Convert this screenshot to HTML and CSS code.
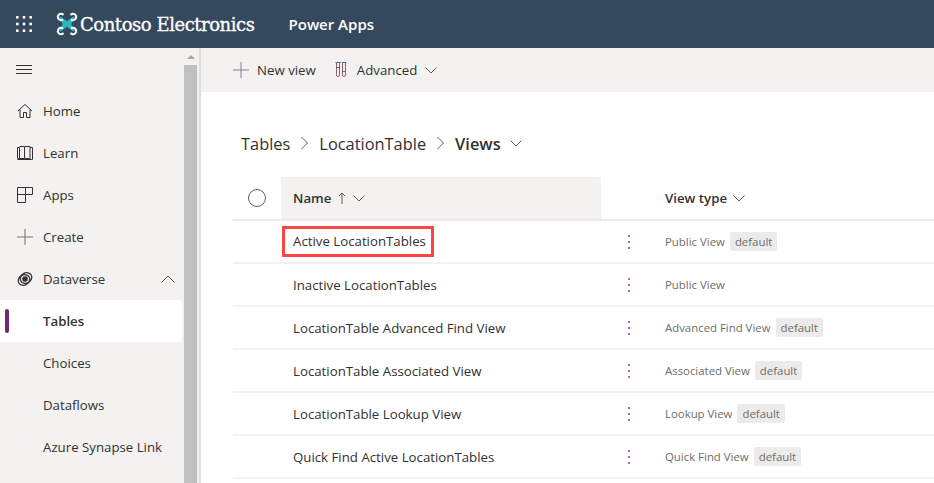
FILE: index.html
```html
<!DOCTYPE html>
<html lang="en">
<head>
    <meta charset="UTF-8">
    <meta name="viewport" content="width=device-width, initial-scale=1.0">
    <title>Power Apps - Views</title>
    <link rel="stylesheet" href="styles.css">
</head>
<body>
    <header class="topbar">
        <svg class="waffle" width="16" height="16" viewBox="0 0 16 16" fill="#fff">
            <rect x="0" y="0" width="2.6" height="2.6"/><rect x="6.7" y="0" width="2.6" height="2.6"/><rect x="13.4" y="0" width="2.6" height="2.6"/>
            <rect x="0" y="6.7" width="2.6" height="2.6"/><rect x="6.7" y="6.7" width="2.6" height="2.6"/><rect x="13.4" y="6.7" width="2.6" height="2.6"/>
            <rect x="0" y="13.4" width="2.6" height="2.6"/><rect x="6.7" y="13.4" width="2.6" height="2.6"/><rect x="13.4" y="13.4" width="2.6" height="2.6"/>
        </svg>
        <svg class="logo" width="22" height="24" viewBox="0 0 22 24">
            <path d="M4 5 L11 10 L18 5 L14.5 12 L18 19 L11 14 L4 19 L7.5 12 Z" fill="#2bb8bd" stroke="#2bb8bd" stroke-width="1.5"/>
            <g fill="none" stroke="#fff" stroke-width="2">
                <path d="M7 7.5A3.2 3.2 0 1 1 7.5 3"/><path d="M15 7.5A3.2 3.2 0 1 0 14.5 3"/>
                <path d="M7 16.5A3.2 3.2 0 1 0 7.5 21"/><path d="M15 16.5A3.2 3.2 0 1 1 14.5 21"/>
            </g>
        </svg>
        <span class="brand">Contoso Electronics</span>
        <span class="product">Power Apps</span>
    </header>

    <div class="layout">
        <nav class="sidebar">
            <div class="nav-scroll">
                <div class="hamburger">
                    <svg width="16" height="10" viewBox="0 0 16 10" stroke="#323130" fill="none">
                        <path d="M0 .5H16M0 4.5H16M0 8.5H16"/>
                    </svg>
                </div>
                <a class="nav-item">
                    <svg class="nav-icon" width="16" height="16" viewBox="0 0 16 16" fill="none" stroke="#323130">
                        <path d="M1 8 L8 1.5 L15 8M3 6.5V14.5H6.5V9.5H9.5V14.5H13V6.5"/>
                    </svg>
                    Home
                </a>
                <a class="nav-item">
                    <svg class="nav-icon" width="16" height="16" viewBox="0 0 16 16" fill="none" stroke="#323130">
                        <path d="M.5 2.5H2.5V13.5H.5ZM2.5 1.5H7.5V13.5H2.5M8 1.5H13V13.5H8M13 2.5H15.5V14.5H.5"/>
                    </svg>
                    Learn
                </a>
                <a class="nav-item">
                    <svg class="nav-icon" width="16" height="16" viewBox="0 0 16 16" fill="none" stroke="#323130">
                        <path d="M.5 .5H15.5V7.5H8.5V15.5H.5ZM.5 7.5H8.5M8.5 .5V7.5"/>
                    </svg>
                    Apps
                </a>
                <a class="nav-item">
                    <svg class="nav-icon" width="16" height="16" viewBox="0 0 16 16" fill="none" stroke="#7a7067">
                        <path d="M0 8H16M8 0V16"/>
                    </svg>
                    Create
                </a>
                <a class="nav-item">
                    <svg class="nav-icon" width="16" height="16" viewBox="0 0 16 16" fill="none" stroke="#323130">
                        <ellipse cx="7" cy="9" rx="6" ry="5" stroke-width="1.3" transform="rotate(-30 7 9)"/>
                        <ellipse cx="9" cy="7" rx="6" ry="5" stroke-width="1.3" transform="rotate(-30 9 7)"/>
                        <circle cx="8" cy="8" r="2.8" fill="#323130" stroke="none"/>
                    </svg>
                    Dataverse
                    <svg class="nav-caret" width="14" height="8" viewBox="0 0 14 8" fill="none" stroke="#605e5c">
                        <path d="M.5 7.5L7 1L13.5 7.5"/>
                    </svg>
                </a>
                <a class="nav-item active"><span class="active-mark"></span>Tables</a>
                <a class="nav-item sub">Choices</a>
                <a class="nav-item sub">Dataflows</a>
                <a class="nav-item sub">Azure Synapse Link</a>
            </div>
            <div class="scrollbar">
                <div class="scroll-up"></div>
                <div class="scroll-thumb"></div>
            </div>
        </nav>

        <main class="content">
            <div class="toolbar">
                <span class="tool">
                    <svg width="16" height="16" viewBox="0 0 16 16" fill="none" stroke="#8a7a94">
                        <path d="M0 8H16M8 0V16"/>
                    </svg>
                    New view
                </span>
                <span class="tool wide">
                    <svg width="12" height="16" viewBox="0 0 12 16" fill="none" stroke="#a05a7a">
                        <path d="M1.5 1V13a1.5 1.5 0 0 0 3 0V1M7.5 1V13a1.5 1.5 0 0 0 3 0V1"/>
                        <path d="M.5 .5H5.5M6.5 .5H11.5M1.5 5.5H4.5M7.5 9.5H10.5" stroke="#3b6fa5"/>
                    </svg>
                    Advanced
                    <svg class="chev" width="12" height="7" viewBox="0 0 12 7" fill="none" stroke="#605e5c">
                        <path d="M.5 .5L6 6L11.5 .5"/>
                    </svg>
                </span>
            </div>

            <div class="breadcrumb">
                <span>Tables</span>
                <svg width="7" height="14" viewBox="0 0 7 14" fill="none" stroke="#605e5c"><path d="M.5 1L6.5 7L.5 13"/></svg>
                <span>LocationTable</span>
                <svg width="7" height="14" viewBox="0 0 7 14" fill="none" stroke="#605e5c"><path d="M.5 1L6.5 7L.5 13"/></svg>
                <strong>Views</strong>
                <svg class="chev" width="12" height="7" viewBox="0 0 12 7" fill="none" stroke="#605e5c"><path d="M.5 .5L6 6L11.5 .5"/></svg>
            </div>

            <div class="grid-head">
                <div class="cell-check"><span class="radio"></span></div>
                <div class="head-name">
                    Name
                    <svg width="8" height="12" viewBox="0 0 8 12" fill="none" stroke="#605e5c"><path d="M4 12V1M1 4L4 1L7 4"/></svg>
                    <svg width="12" height="7" viewBox="0 0 12 7" fill="none" stroke="#605e5c"><path d="M.5 .5L6 6L11.5 .5"/></svg>
                </div>
                <div></div>
                <div class="head-type">
                    View type
                    <svg width="12" height="7" viewBox="0 0 12 7" fill="none" stroke="#605e5c"><path d="M.5 .5L6 6L11.5 .5"/></svg>
                </div>
            </div>

            <div class="row">
                <div></div>
                <div class="name"><span class="callout">Active LocationTables</span></div>
                <div class="more"><i></i><i></i><i></i></div>
                <div class="type">Public View <span class="tag">default</span></div>
            </div>
            <div class="row">
                <div></div>
                <div class="name">Inactive LocationTables</div>
                <div class="more"><i></i><i></i><i></i></div>
                <div class="type">Public View</div>
            </div>
            <div class="row">
                <div></div>
                <div class="name">LocationTable Advanced Find View</div>
                <div class="more"><i></i><i></i><i></i></div>
                <div class="type">Advanced Find View <span class="tag">default</span></div>
            </div>
            <div class="row">
                <div></div>
                <div class="name">LocationTable Associated View</div>
                <div class="more"><i></i><i></i><i></i></div>
                <div class="type">Associated View <span class="tag">default</span></div>
            </div>
            <div class="row">
                <div></div>
                <div class="name">LocationTable Lookup View</div>
                <div class="more"><i></i><i></i><i></i></div>
                <div class="type">Lookup View <span class="tag">default</span></div>
            </div>
            <div class="row">
                <div></div>
                <div class="name">Quick Find Active LocationTables</div>
                <div class="more"><i></i><i></i><i></i></div>
                <div class="type">Quick Find View <span class="tag">default</span></div>
            </div>
        </main>
    </div>
</body>
</html>
```

FILE: styles.css
```css
* {
    box-sizing: border-box;
}
html, body {
    height: 100%;
}
body {
    margin: 0;
    overflow: hidden;
    font-family: "Open Sans", "Noto Sans", sans-serif;
    font-size: 13.25px;
    color: #323130;
    background: #fff;
    display: flex;
    flex-direction: column;
}
svg {
    flex: none;
}

.topbar {
    height: 48px;
    flex: none;
    display: flex;
    align-items: center;
    background: #35495e;
    color: #fff;
    padding-left: 16px;
}
.logo {
    margin-left: 24px;
}
.brand {
    font-family: "DejaVu Serif", serif;
    font-size: 18px;
    margin-left: 2px;
    letter-spacing: -0.45px;
    -webkit-text-stroke: 0.3px #fff;
}
.product {
    font-size: 15px;
    font-weight: 600;
    margin-left: 34px;
}

.layout {
    flex: 1;
    display: flex;
    min-height: 0;
}

.sidebar {
    width: 201px;
    flex: none;
    display: flex;
    background: #f3f2f1;
    border-right: 2px solid #e1dfdd;
}
.nav-scroll {
    width: 184px;
    flex: none;
}
.hamburger {
    height: 42px;
    padding: 2px 0 0 16px;
    display: flex;
    align-items: center;
}
.nav-item {
    height: 42px;
    display: flex;
    align-items: center;
    gap: 10px;
    padding-left: 17px;
    position: relative;
}
.nav-caret {
    margin-left: auto;
    margin-right: 9px;
}
.nav-item.sub {
    padding-left: 43px;
}
.nav-item.active {
    width: 182px;
    padding-left: 43px;
    background: #fff;
    border-radius: 2px;
    font-weight: 600;
}
.active-mark {
    position: absolute;
    left: 5px;
    top: 9px;
    width: 4px;
    height: 24px;
    border-radius: 2px;
    background: #742774;
}
.scrollbar {
    width: 13px;
    flex: none;
    display: flex;
    flex-direction: column;
    align-items: center;
}
.scroll-up {
    width: 0;
    height: 0;
    margin-top: 7px;
    border-left: 4px solid transparent;
    border-right: 4px solid transparent;
    border-bottom: 4px solid #a6a6a6;
}
.scroll-thumb {
    flex: 1;
    align-self: stretch;
    margin-top: 6px;
    background: #c0c0c0;
}

.content {
    flex: 1;
    min-width: 0;
}
.toolbar {
    height: 44px;
    display: flex;
    align-items: center;
    gap: 19px;
    padding-left: 32px;
    background: #f3f2f1;
}
.tool {
    display: flex;
    align-items: center;
    gap: 8px;
}
.tool.wide {
    gap: 10px;
}
.chev {
    margin-left: -2px;
}

.breadcrumb {
    display: flex;
    align-items: center;
    gap: 11px;
    height: 30px;
    margin: 36px 0 0 40px;
    font-size: 16.4px;
}
.breadcrumb strong {
    font-weight: 600;
}

.grid-head, .row {
    display: grid;
    grid-template-columns: 48px 320px 64px 1fr;
    margin-left: 32px;
}
.grid-head {
    height: 44px;
    margin-top: 19px;
    border-bottom: 2px solid #edebe9;
    font-weight: 600;
}
.cell-check {
    display: flex;
    align-items: center;
    padding-left: 15px;
}
.radio {
    width: 18px;
    height: 18px;
    border: 1px solid #605e5c;
    border-radius: 50%;
}
.head-name {
    display: flex;
    align-items: center;
    gap: 7px;
    padding-left: 12px;
    background: #f3f2f1;
}
.head-type {
    display: flex;
    align-items: center;
    gap: 6px;
}
.row {
    height: 43px;
    align-items: center;
    border-bottom: 2px solid #f3f2f1;
}
.name {
    padding-left: 12px;
}
.callout {
    display: inline-block;
    margin-left: -11px;
    padding: 3px 5px 3px 8px;
    line-height: 19px;
    border: 3px solid #f44;
}
.more {
    display: flex;
    flex-direction: column;
    align-items: center;
    gap: 4px;
    width: 56px;
}
.more i {
    width: 2px;
    height: 2px;
    background: #a86db0;
}
.type {
    font-size: 11.4px;
    color: #6e6c6a;
    display: flex;
    align-items: center;
    gap: 5px;
}
.tag {
    padding: 2px 5px;
    background: #edebe9;
    border-radius: 2px;
}
```
